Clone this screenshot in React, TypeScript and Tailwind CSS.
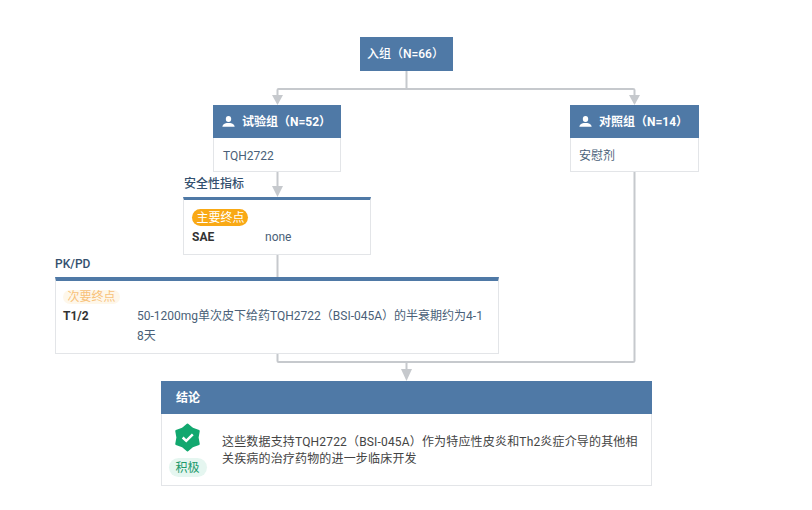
const font = "font-['Roboto','Noto_Sans_CJK_SC',sans-serif]";

function UserIcon() {
  return (
    <svg viewBox="0 0 13 11" className="w-[13px] h-[11px] fill-white shrink-0">
      <ellipse cx="6.5" cy="3" rx="2.7" ry="3" />
      <path d="M0.3 10.8 C0.4 8.6 2.4 7.8 4.6 7 L8.4 7 C10.6 7.8 12.6 8.6 12.7 10.8 Z" />
    </svg>
  );
}

function Connectors() {
  const stroke = "#c6c9cd";
  return (
    <svg className="absolute left-0 top-0" width="812" height="510" fill="none">
      <g stroke={stroke} strokeWidth="2">
        <path d="M406.5 71 V89 M277.5 97 V90 Q277.5 89 278.5 89 H633 Q634.5 89 634.5 90 V97" />
        <path d="M277.5 172 V188" />
        <path d="M277.5 255 V277" />
        <path d="M277.5 354 V361 Q277.5 362 278.5 362 H633 Q634.5 362 634.5 361 V172" />
        <path d="M406.5 362 V372" />
      </g>
      <g fill={stroke}>
        <path d="M272 95 H283 L277.5 105 Z" />
        <path d="M629 95 H640 L634.5 105 Z" />
        <path d="M272 186 H283 L277.5 197 Z" />
        <path d="M401 369 H412 L406.5 381 Z" />
      </g>
    </svg>
  );
}

function GroupCard({ title, body, className, bodyPad }: { title: string; body: string; className: string; bodyPad: string }) {
  return (
    <div className={`absolute top-[105px] ${className}`}>
      <div className="h-[33px] bg-[#4f79a6] flex items-center pl-[9px] gap-[7px] text-[12px] font-bold text-white">
        <UserIcon />
        <span>{title}</span>
      </div>
      <div className={`h-[34px] bg-white border border-t-0 border-[#e3e5e8] flex items-center pt-[2px] text-[12px] text-[#4a5f78] ${bodyPad}`}>
        {body}
      </div>
    </div>
  );
}

export default function App() {
  return (
    <div className={`relative w-[812px] h-[510px] bg-white overflow-hidden ${font}`}>
      <Connectors />

      {/* Enrollment */}
      <div className="absolute left-[360px] top-[37px] w-[93px] h-[34px] bg-[#4f79a6] flex items-center pl-[7px] text-[12px] font-medium text-white">
        入组（N=66）
      </div>

      <GroupCard title="试验组（N=52）" body="TQH2722" bodyPad="pl-[9px]" className="left-[213px] w-[128px]" />
      <GroupCard title="对照组（N=14）" body="安慰剂" bodyPad="pl-[8px]" className="left-[570px] w-[129px]" />

      {/* Safety */}
      <div className="absolute left-[184px] top-[176px] text-[12px] leading-[16px] font-medium text-[#34506e]">安全性指标</div>
      <div className="absolute left-[183px] top-[197px] w-[188px] h-[58px] bg-white border border-t-[3px] border-[#e3e5e8] border-t-[#4f79a6] pl-[8px] pt-[9px]">
        <span className="flex w-[56px] h-[17px] pl-[1px] items-center justify-center rounded-full bg-[#f9a915] text-[12px] text-white">主要终点</span>
        <div className="flex text-[12px] leading-[20px] mt-[1px]">
          <span className="w-[73px] font-bold text-[#333]">SAE</span>
          <span className="text-[#4a5f78]">none</span>
        </div>
      </div>

      {/* PK/PD */}
      <div className="absolute left-[55px] top-[256px] text-[12px] leading-[16px] font-medium text-[#34506e]">PK/PD</div>
      <div className="absolute left-[55px] top-[277px] w-[444px] h-[77px] bg-white border border-t-[4px] border-[#e3e5e8] border-t-[#4f79a6] pl-[7px] pt-[9px]">
        <span className="flex w-[57px] h-[14px] items-center justify-center rounded-full bg-[#fef7ea] text-[12px] text-[#f8c27a]">次要终点</span>
        <div className="flex text-[12px] leading-[20px] mt-[2px]">
          <span className="w-[74px] shrink-0 font-bold text-[#333]">T1/2</span>
          <span className="w-[352px] break-all text-[#4a5f78]">50-1200mg单次皮下给药TQH2722（BSI-045A）的半衰期约为4-18天</span>
        </div>
      </div>

      {/* Conclusion */}
      <div className="absolute left-[161px] top-[381px] w-[491px] h-[105px] bg-white border border-[#e3e5e8] border-t-0">
        <div className="h-[33px] -mx-px bg-[#4f79a6] flex items-center pl-[15px] text-[12px] font-bold text-white">结论</div>
        <div className="flex pl-[6px]">
          <div className="w-[39px] shrink-0 flex flex-col items-center pt-[9px]">
            <svg viewBox="0 0 28 30" className="w-[27px] h-[29px]">
              <path
                d="M14 1.5 L19.25 5.9 L25.7 8.25 L24.5 15 L25.7 21.75 L19.25 24.1 L14 28.5 L8.75 24.1 L2.3 21.75 L3.5 15 L2.3 8.25 L8.75 5.9 Z"
                fill="#12a86f"
                stroke="#12a86f"
                strokeWidth="2"
                strokeLinejoin="round"
              />
              <path d="M9 15 L12.7 18.5 L19.5 11.8" stroke="#fff" strokeWidth="2.6" fill="none" />
            </svg>
            <span className="mt-[6px] flex w-[38px] h-[19px] items-center justify-center rounded-full bg-[#e5f6f0] text-[12px] text-[#1c9a6c]">积极</span>
          </div>
          <p className="ml-[15px] mt-[20px] w-[424px] break-all text-[12px] leading-[17px] tracking-[0.17px] text-[#444]">
            这些数据支持TQH2722（BSI-045A）作为特应性皮炎和Th2炎症介导的其他相关疾病的治疗药物的进一步临床开发
          </p>
        </div>
      </div>
    </div>
  );
}
